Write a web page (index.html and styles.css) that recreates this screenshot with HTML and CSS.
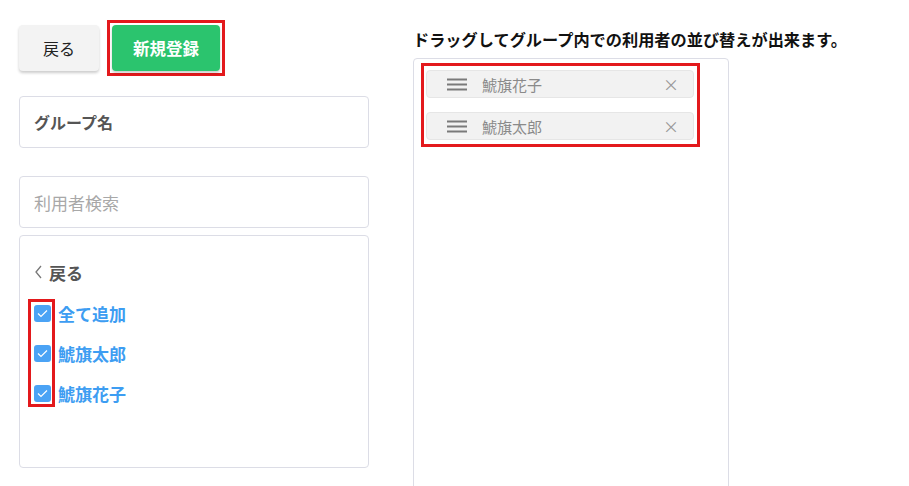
FILE: index.html
```html
<!DOCTYPE html>
<html lang="ja">
<head>
    <meta charset="UTF-8">
    <meta name="viewport" content="width=device-width, initial-scale=1.0">
    <title>グループ登録</title>
    <link rel="stylesheet" href="styles.css">
</head>
<body>

    <div class="page">
        <!-- 左カラム -->
        <div class="left">
            <div class="actions">
                <button class="btn-back">戻る</button>
                <div class="mark-save">
                    <button class="btn-save">新規登録</button>
                </div>
            </div>

            <div class="field field-name">グループ名</div>
            <div class="field field-search">利用者検索</div>

            <div class="user-list">
                <div class="list-back">
                    <svg width="9" height="14" viewBox="0 0 9 14"><path d="M7 1 L2 7 L7 13" fill="none" stroke="#777" stroke-width="1.3"/></svg>
                    <span>戻る</span>
                </div>
                <div class="check-row"><span class="check"><svg width="11" height="9" viewBox="0 0 11 9"><path d="M1 4.5 L4 7.5 L10 1.5" fill="none" stroke="#fff" stroke-width="1.2"/></svg></span>全て追加</div>
                <div class="check-row"><span class="check"><svg width="11" height="9" viewBox="0 0 11 9"><path d="M1 4.5 L4 7.5 L10 1.5" fill="none" stroke="#fff" stroke-width="1.2"/></svg></span>鯱旗太郎</div>
                <div class="check-row"><span class="check"><svg width="11" height="9" viewBox="0 0 11 9"><path d="M1 4.5 L4 7.5 L10 1.5" fill="none" stroke="#fff" stroke-width="1.2"/></svg></span>鯱旗花子</div>
                <div class="mark-checks"></div>
            </div>
        </div>

        <!-- 右カラム -->
        <div class="right">
            <h3>ドラッグしてグループ内での利用者の並び替えが出来ます。</h3>
            <div class="sort-panel">
                <div class="sort-items">
                    <div class="sort-item">
                        <svg class="handle" width="20" height="13" viewBox="0 0 20 13"><path d="M0 1.5 H20 M0 6.5 H20 M0 11.5 H20" stroke="#7a7a7a" stroke-width="2"/></svg>
                        <span class="name">鯱旗花子</span>
                        <span class="remove">×</span>
                    </div>
                    <div class="sort-item">
                        <svg class="handle" width="20" height="13" viewBox="0 0 20 13"><path d="M0 1.5 H20 M0 6.5 H20 M0 11.5 H20" stroke="#7a7a7a" stroke-width="2"/></svg>
                        <span class="name">鯱旗太郎</span>
                        <span class="remove">×</span>
                    </div>
                </div>
            </div>
        </div>
    </div>

</body>
</html>
```

FILE: styles.css
```css
body {
    font-family: "Noto Sans CJK JP", "Noto Sans", sans-serif;
    margin: 0;
    padding: 0;
    background-color: #fff;
    color: #333;
}

.page {
    display: flex;
    gap: 44px;
    padding-left: 19px;
    height: 486px;
    overflow: hidden;
}

.left {
    width: 350px;
}

.actions {
    display: flex;
    align-items: flex-start;
    gap: 8px;
    padding-top: 25px;
    height: 46px;
}

.btn-back {
    width: 80px;
    height: 46px;
    border: none;
    border-radius: 4px;
    background-color: #f3f3f3;
    box-shadow: 0 2px 3px rgba(0, 0, 0, 0.2);
    font-family: inherit;
    font-size: 16px;
    color: #222;
    padding: 0;
}

/* 赤枠（注記） */
.mark-save {
    margin-top: -5px;
    padding: 2px;
    border: 3px solid #e3191c;
    display: flex;
}

.btn-save {
    width: 108px;
    height: 46px;
    border: none;
    border-radius: 4px;
    background-color: #2bc46e;
    box-shadow: 0 2px 3px rgba(0, 0, 0, 0.2);
    font-family: inherit;
    font-size: 16.5px;
    font-weight: bold;
    color: #fff;
    padding: 0;
}

.field {
    height: 52px;
    box-sizing: border-box;
    border: 1px solid #dcdde6;
    border-radius: 4px;
    padding-left: 14px;
    display: flex;
    align-items: center;
    font-size: 16px;
}

.field-name {
    margin-top: 25px;
    font-weight: bold;
    color: #555;
}

.field-search {
    margin-top: 28px;
    font-size: 17px;
    color: #a8a8a8;
}

/* 利用者リスト */
.user-list {
    position: relative;
    margin-top: 7px;
    height: 233px;
    box-sizing: border-box;
    border: 1px solid #dcdde6;
    border-radius: 4px;
    padding: 24px 0 0 14px;
}

.list-back {
    display: flex;
    align-items: center;
    gap: 6px;
    height: 24px;
    font-size: 17px;
    font-weight: bold;
    color: #555;
    margin-bottom: 9px;
}

.check-row {
    display: flex;
    align-items: center;
    height: 40px;
    font-size: 17px;
    font-weight: bold;
    color: #3d9df2;
}

.check {
    width: 17px;
    height: 17px;
    margin-right: 7px;
    border-radius: 3px;
    background-color: #4ba3f5;
    display: flex;
    align-items: center;
    justify-content: center;
}

.mark-checks {
    position: absolute;
    left: 8px;
    top: 63px;
    width: 21px;
    height: 102px;
    border: 3px solid #e3191c;
}

/* 並び替え */
.right h3 {
    margin: 29px 0 9px;
    font-size: 16.2px;
    line-height: 20px;
    color: #111;
}

.sort-panel {
    width: 316px;
    height: 440px;
    box-sizing: border-box;
    border: 1px solid #dcdde6;
    border-radius: 4px;
    padding: 4px 7px;
}

.sort-items {
    width: 279px;
    box-sizing: border-box;
    border: 3px solid #e3191c;
    padding: 4px 3px 4px 2px;
    display: flex;
    flex-direction: column;
    gap: 14px;
}

.sort-item {
    height: 28px;
    box-sizing: border-box;
    background-color: #f2f2f2;
    border: 1px solid #e6e6e6;
    border-radius: 4px;
    display: flex;
    align-items: center;
    padding-left: 20px;
    padding-right: 14px;
}

.sort-item .name {
    margin-left: 15px;
    font-size: 15px;
    color: #8a8a8a;
    flex: 1;
}

.sort-item .remove {
    font-size: 16px;
    color: #999;
}
```
